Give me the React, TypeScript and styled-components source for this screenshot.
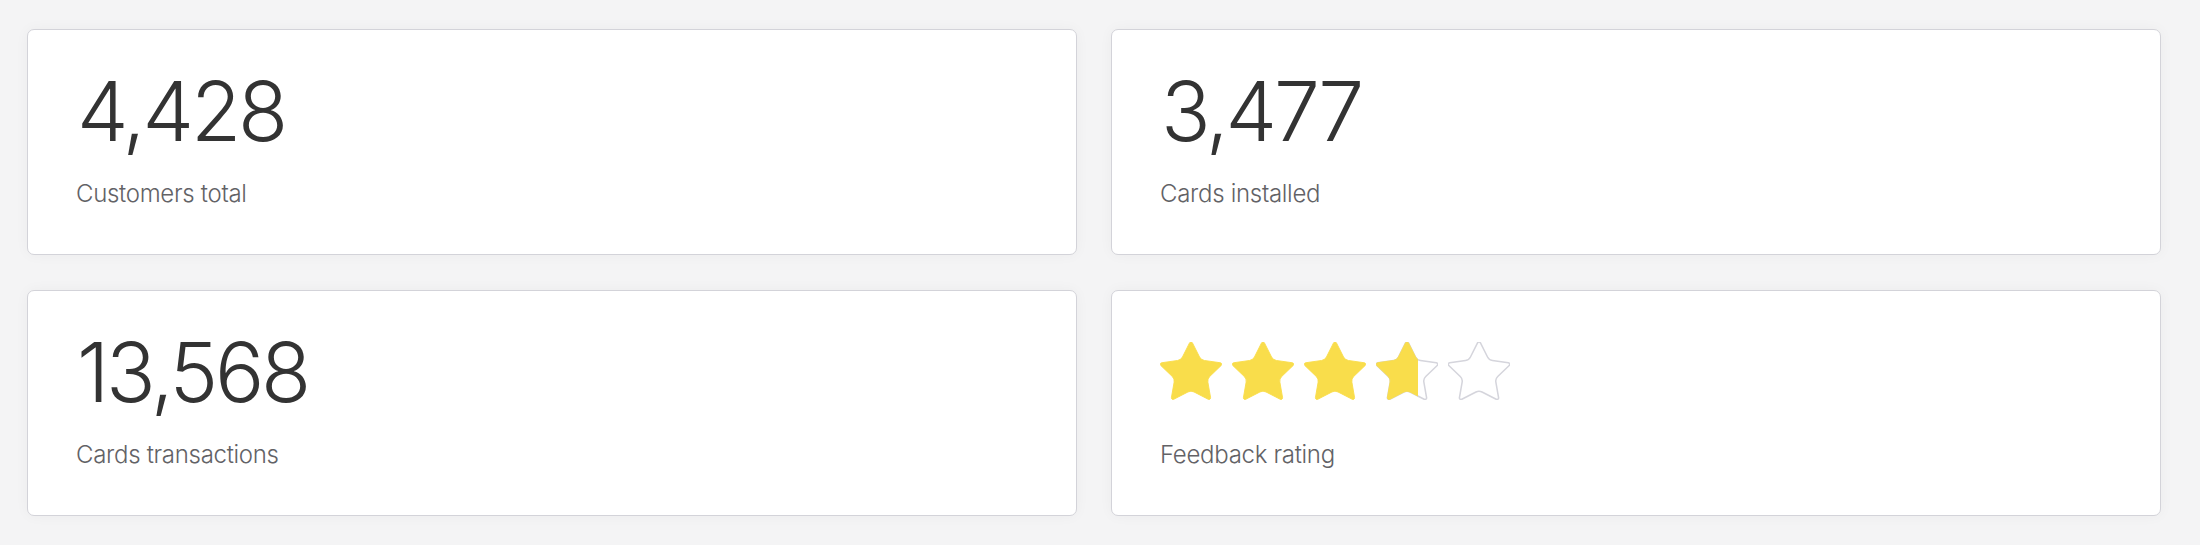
import React from "react";
import styled, { createGlobalStyle } from "styled-components";

const GlobalStyle = createGlobalStyle`
  html, body {
    margin: 0;
    padding: 0;
    background: #f4f4f5;
  }
  body {
    min-height: 100vh;
    font-family: Inter, "Liberation Sans", sans-serif;
    color: #333333;
  }
`;

const Page = styled.main`
  box-sizing: border-box;
  padding: 29px 39px 30px 27px;
  display: grid;
  grid-template-columns: 1050px 1050px;
  grid-auto-rows: 226px;
  column-gap: 34px;
  row-gap: 35px;
`;

const Card = styled.section`
  box-sizing: border-box;
  background: #ffffff;
  border: 1.5px solid #d3d3d9;
  border-radius: 7px;
  box-shadow: 0 0 14px rgba(24, 24, 40, 0.04);
  padding: 41px 48px 0 48px;
  display: flex;
  flex-direction: column;
  gap: 29px;
`;

const Value = styled.div`
  font-family: Inter, "Liberation Sans", sans-serif;
  font-size: 82px;
  font-weight: 350;
  line-height: 82px;
  height: 82px;
  color: #333333;
  letter-spacing: -3.2px;
  padding-left: 1px;
`;

const Label = styled.div`
  font-family: Inter, "Liberation Sans", sans-serif;
  font-size: 24px;
  font-weight: 350;
  line-height: 24px;
  color: #626266;
  letter-spacing: -0.3px;
`;

const Stars = styled.div`
  height: 82px;
  display: flex;
  align-items: flex-start;
  gap: 10px;
  padding-top: 10px;
  box-sizing: border-box;
`;

const StarSlot = styled.div`
  position: relative;
  width: 62px;
  height: 58px;
  flex: none;
`;

const FillClip = styled.div`
  position: absolute;
  top: 0;
  left: 0;
  height: 100%;
  overflow: hidden;
`;

const STAR_PATH =
  "M11.525 2.295a.53.53 0 0 1 .95 0l2.31 4.679a2.123 2.123 0 0 0 1.595 1.16l5.166.756a.53.53 0 0 1 .294.904l-3.736 3.638a2.123 2.123 0 0 0-.611 1.878l.882 5.14a.53.53 0 0 1-.771.56l-4.618-2.428a2.122 2.122 0 0 0-1.973 0L6.396 21.01a.53.53 0 0 1-.77-.56l.881-5.139a2.122 2.122 0 0 0-.611-1.879L2.16 9.795a.53.53 0 0 1 .294-.906l5.165-.755a2.122 2.122 0 0 0 1.597-1.16z";

const StarShape: React.FC<{ filled: boolean }> = ({ filled }) => (
  <svg
    width="62"
    height="58"
    viewBox="1.9 2.0 20.2 19.25"
    preserveAspectRatio="none"
    style={{ display: "block" }}
  >
    <path
      d={STAR_PATH}
      fill={filled ? "#f9dd4b" : "none"}
      stroke={filled ? "#f9dd4b" : "#d5d5dc"}
      strokeWidth={filled ? 0.3 : 0.5}
      strokeLinejoin="round"
    />
  </svg>
);

const Star: React.FC<{ fraction: number }> = ({ fraction }) => (
  <StarSlot>
    {fraction < 1 && <StarShape filled={false} />}
    {fraction > 0 && (
      <FillClip style={{ width: `${fraction * 100}%` }}>
        <StarShape filled />
      </FillClip>
    )}
  </StarSlot>
);

const Rating: React.FC<{ value: number }> = ({ value }) => (
  <Stars>
    {[0, 1, 2, 3, 4].map((i) => (
      <Star key={i} fraction={Math.max(0, Math.min(1, value - i))} />
    ))}
  </Stars>
);

export default function App() {
  return (
    <>
      <GlobalStyle />
      <Page>
        <Card>
          <Value>4,428</Value>
          <Label>Customers total</Label>
        </Card>
        <Card>
          <Value>3,477</Value>
          <Label>Cards installed</Label>
        </Card>
        <Card>
          <Value>13,568</Value>
          <Label>Cards transactions</Label>
        </Card>
        <Card>
          <Rating value={3.68} />
          <Label>Feedback rating</Label>
        </Card>
      </Page>
    </>
  );
}
